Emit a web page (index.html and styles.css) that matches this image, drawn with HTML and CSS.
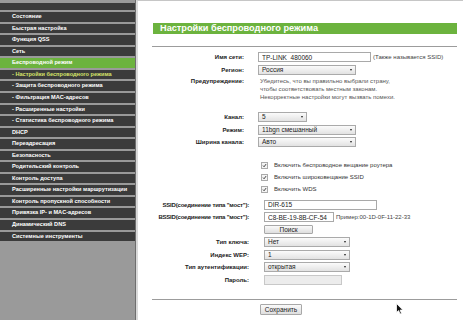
FILE: index.html
```html
<!DOCTYPE html>
<html lang="ru">
<head>
    <meta charset="UTF-8">
    <meta name="viewport" content="width=device-width, initial-scale=1.0">
    <title>Настройки беспроводного режима</title>
    <link rel="stylesheet" href="styles.css">
</head>
<body>
    <div class="page">
        <ul class="menu">
            <li class="menu-top"></li>
            <li>Состояние</li>
            <li>Быстрая настройка</li>
            <li>Функция QSS</li>
            <li>Сеть</li>
            <li class="active">Беспроводной режим</li>
            <li class="current">- Настройки беспроводного режима</li>
            <li>- Защита беспроводного режима</li>
            <li>- Фильтрация MAC-адресов</li>
            <li>- Расширенные настройки</li>
            <li>- Статистика беспроводного режима</li>
            <li>DHCP</li>
            <li>Переадресация</li>
            <li>Безопасность</li>
            <li>Родительский контроль</li>
            <li>Контроль доступа</li>
            <li>Расширенные настройки маршрутизации</li>
            <li>Контроль пропускной способности</li>
            <li>Привязка IP- и MAC-адресов</li>
            <li>Динамический DNS</li>
            <li>Системные инструменты</li>
        </ul>

        <div class="content">
            <h2 class="title">Настройки беспроводного режима</h2>
            <div class="rule"></div>

            <div class="form">
                <div class="row first">
                    <label class="name">Имя сети:</label>
                    <input class="text ssid" type="text" value="TP-LINK_480060">
                    <span class="note">(Также называется SSID)</span>
                </div>
                <div class="row">
                    <label class="name">Регион:</label>
                    <div class="select wide-select"><span>Россия</span></div>
                </div>
                <div class="row warn">
                    <label class="name">Предупреждение:</label>
                    <p class="warn-text">Убедитесь, что вы правильно выбрали страну,<br>чтобы соответствовать местным законам.<br>Некорректные настройки могут вызвать помехи.</p>
                </div>
                <div class="row channel">
                    <label class="name">Канал:</label>
                    <div class="select small-select"><span>5</span></div>
                </div>
                <div class="row">
                    <label class="name">Режим:</label>
                    <div class="select wide-select"><span>11bgn смешанный</span></div>
                </div>
                <div class="row">
                    <label class="name">Ширина канала:</label>
                    <div class="select wide-select"><span>Авто</span></div>
                </div>
                <div class="row check first-check">
                    <span class="name"></span>
                    <span class="box"><svg viewBox="0 0 6 6" width="6" height="6"><path d="M1.2 3.1 L2.5 4.5 L4.9 1.3" fill="none" stroke="#333" stroke-width="1.1"/></svg></span>
                    <span>Включить беспроводное вещание роутера</span>
                </div>
                <div class="row check">
                    <span class="name"></span>
                    <span class="box"><svg viewBox="0 0 6 6" width="6" height="6"><path d="M1.2 3.1 L2.5 4.5 L4.9 1.3" fill="none" stroke="#333" stroke-width="1.1"/></svg></span>
                    <span>Включить широковещание SSID</span>
                </div>
                <div class="row check">
                    <span class="name"></span>
                    <span class="box"><svg viewBox="0 0 6 6" width="6" height="6"><path d="M1.2 3.1 L2.5 4.5 L4.9 1.3" fill="none" stroke="#333" stroke-width="1.1"/></svg></span>
                    <span>Включить WDS</span>
                </div>
            </div>

            <div class="form wds">
                <div class="row">
                    <label class="name long">SSID(соединение типа "мост"):</label>
                    <input class="text ssid" type="text" value="DIR-615">
                </div>
                <div class="row">
                    <label class="name long">BSSID(соединение типа "мост"):</label>
                    <input class="text bssid" type="text" value="C8-BE-19-8B-CF-54">
                    <span class="note">Пример:00-1D-0F-11-22-33</span>
                </div>
                <div class="row">
                    <span class="name"></span>
                    <button class="btn search">Поиск</button>
                </div>
                <div class="row">
                    <label class="name">Тип ключа:</label>
                    <div class="select key-select"><span>Нет</span></div>
                </div>
                <div class="row">
                    <label class="name">Индекс WEP:</label>
                    <div class="select key-select"><span>1</span></div>
                </div>
                <div class="row">
                    <label class="name">Тип аутентификации:</label>
                    <div class="select key-select"><span>открытая</span></div>
                </div>
                <div class="row">
                    <label class="name">Пароль:</label>
                    <input class="text pass" type="text" disabled>
                </div>
            </div>

            <div class="rule bottom-rule"></div>
            <div class="actions">
                <button class="btn save">Сохранить</button>
            </div>
        </div>

        <svg class="cursor" viewBox="0 0 8 12" width="8" height="12">
            <path d="M0.5 0.5 L0.5 9.5 L2.6 7.6 L4.1 11 L5.5 10.4 L4.1 7.1 L6.9 7.1 Z" fill="#111" stroke="#fff" stroke-width="0.8"/>
        </svg>
    </div>
</body>
</html>
```

FILE: styles.css
```css
body {
    margin: 0;
    font-family: "Liberation Sans", Arial, sans-serif;
    background-color: #fff;
    color: #333;
}
.page {
    position: relative;
    display: flex;
    height: 320px;
    overflow: hidden;
}

/* left menu */
.menu {
    flex: none;
    width: 135px;
    margin: 0;
    padding: 3.3px 0 0;
    list-style: none;
    background-color: #9a9a9a;
    border-right: 1px solid #6e6e6e;
}
.menu li {
    height: 9.55px;
    line-height: 9.55px;
    margin-bottom: 2px;
    padding-left: 12px;
    background-color: #3b3b3b;
    color: #fff;
    font-size: 5.6px;
    font-weight: bold;
    white-space: nowrap;
    overflow: hidden;
}
.menu .menu-top {
    height: 6.9px;
}
.menu .active {
    background-color: #6cb33e;
}
.menu .current {
    color: #d6e46a;
}

/* content */
.content {
    flex: 1;
    padding: 22px 6px 0 15px;
    border-left: 2px solid #d9d9d9;
    border-top: 1px solid #c6c6c6;
    background-color: #fff;
}
.title {
    height: 10.5px;
    margin: 0;
    padding-left: 7px;
    line-height: 10.5px;
    background-color: #6cb33e;
    color: #fff;
    font-size: 9.2px;
    font-weight: bold;
}
.rule {
    height: 1px;
    margin-top: 12.5px;
    margin-left: -1px;
    background-color: #9c9c9c;
}
.form {
    margin-top: 3.75px;
}
.row {
    display: flex;
    align-items: center;
    height: 12.5px;
    font-size: 6px;
}
.row .name {
    flex: none;
    width: 91px;
    margin-right: 14px;
    text-align: right;
    font-weight: bold;
    color: #222;
    white-space: nowrap;
}
.wds {
    margin-top: 3.25px;
}
.wds .name {
    width: 96px;
    margin-right: 15px;
}
.wds .long {
    letter-spacing: -0.2px;
}
.row.warn {
    align-items: flex-start;
    height: 24px;
    margin-top: 1.25px;
    line-height: 8px;
}
.warn-text {
    margin: 0 0 0 2px;
    color: #555;
}
.row.channel {
    margin-top: 9.75px;
}
.row.check {
    height: 12px;
}
.row.first-check {
    margin-top: 10.75px;
}
.box {
    display: flex;
    width: 5px;
    height: 5px;
    margin: 0 6px 0 3px;
    border: 1px solid #aaa;
    background-color: #f4f4f4;
}
.box svg {
    width: 5px;
    height: 5px;
}
.note {
    margin-left: 2px;
    color: #444;
}

/* controls */
.text {
    box-sizing: border-box;
    height: 10px;
    margin: 0;
    padding: 0 3px;
    border: 1px solid #a9a9a9;
    background-color: #fff;
    font-family: inherit;
    font-size: 6.5px;
    color: #222;
}
.ssid {
    width: 113px;
}
.bssid {
    width: 70px;
}
.pass {
    width: 78px;
    border-color: #c8c8c8;
    background-color: #ececec;
}
.select {
    position: relative;
    box-sizing: border-box;
    height: 10px;
    padding-left: 3px;
    border: 1px solid #aaa;
    background: linear-gradient(#fbfbfb, #e2e2e2);
    line-height: 8px;
    font-size: 6.5px;
    color: #222;
}
.select::after {
    content: "";
    position: absolute;
    right: 3.5px;
    top: 3px;
    border-left: 1.8px solid transparent;
    border-right: 1.8px solid transparent;
    border-top: 2.6px solid #222;
}
.wide-select {
    width: 98px;
}
.small-select {
    width: 49px;
}
.key-select {
    width: 86px;
}
.btn {
    box-sizing: border-box;
    height: 9.5px;
    margin: 0;
    padding: 0;
    border: 1px solid #a8a8a8;
    border-radius: 1px;
    background: linear-gradient(#fafafa, #dedede);
    font-family: inherit;
    font-size: 6.5px;
    line-height: 7px;
    color: #222;
}
.search {
    width: 49px;
}
.bottom-rule {
    margin-top: 13.25px;
    height: 1.2px;
}
.actions {
    display: flex;
    padding-left: 107px;
    margin-top: 4.3px;
}
.save {
    width: 42px;
    height: 10.7px;
}
.cursor {
    position: absolute;
    left: 396px;
    top: 303px;
}
```
